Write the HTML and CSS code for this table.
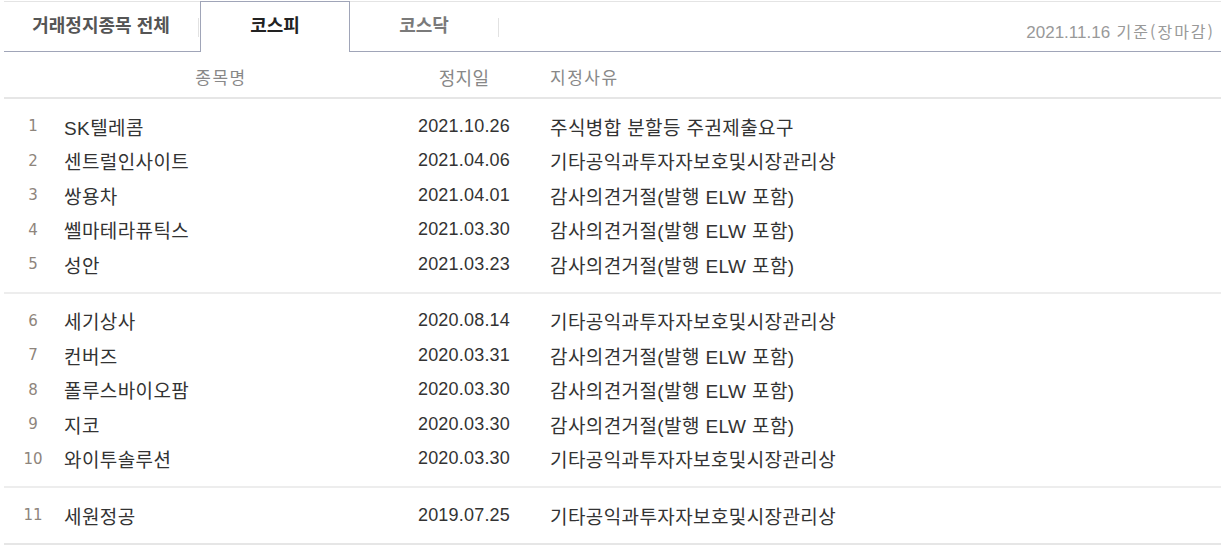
FILE: index.html
```html
<!DOCTYPE html>
<html lang="ko">
<head>
    <meta charset="UTF-8">
    <title>거래정지종목</title>
    <link rel="stylesheet" href="styles.css">
</head>
<body>
    <div class="board">
        <div class="tabs">
            <a class="tab tab-all">거래정지종목 전체</a><span class="sep"></span>
            <a class="tab on">코스피</a>
            <a class="tab">코스닥</a><span class="sep"></span>
            <p class="base-date"><span class="num">2021.11.16</span> 기준(장마감)</p>
        </div>
        <div class="row thead">
            <span></span>
            <span class="name">종목명</span>
            <span class="date">정지일</span>
            <span class="reason">지정사유</span>
        </div>
        <div class="group">
            <div class="row"><span class="no">1</span><span class="name">SK텔레콤</span><span class="date">2021.10.26</span><span class="reason">주식병합 분할등 주권제출요구</span></div>
            <div class="row"><span class="no">2</span><span class="name">센트럴인사이트</span><span class="date">2021.04.06</span><span class="reason">기타공익과투자자보호및시장관리상</span></div>
            <div class="row"><span class="no">3</span><span class="name">쌍용차</span><span class="date">2021.04.01</span><span class="reason">감사의견거절(발행 ELW 포함)</span></div>
            <div class="row"><span class="no">4</span><span class="name">쎌마테라퓨틱스</span><span class="date">2021.03.30</span><span class="reason">감사의견거절(발행 ELW 포함)</span></div>
            <div class="row"><span class="no">5</span><span class="name">성안</span><span class="date">2021.03.23</span><span class="reason">감사의견거절(발행 ELW 포함)</span></div>
        </div>
        <div class="group">
            <div class="row"><span class="no">6</span><span class="name">세기상사</span><span class="date">2020.08.14</span><span class="reason">기타공익과투자자보호및시장관리상</span></div>
            <div class="row"><span class="no">7</span><span class="name">컨버즈</span><span class="date">2020.03.31</span><span class="reason">감사의견거절(발행 ELW 포함)</span></div>
            <div class="row"><span class="no">8</span><span class="name">폴루스바이오팜</span><span class="date">2020.03.30</span><span class="reason">감사의견거절(발행 ELW 포함)</span></div>
            <div class="row"><span class="no">9</span><span class="name">지코</span><span class="date">2020.03.30</span><span class="reason">감사의견거절(발행 ELW 포함)</span></div>
            <div class="row"><span class="no">10</span><span class="name">와이투솔루션</span><span class="date">2020.03.30</span><span class="reason">기타공익과투자자보호및시장관리상</span></div>
        </div>
        <div class="group last">
            <div class="row"><span class="no">11</span><span class="name">세원정공</span><span class="date">2019.07.25</span><span class="reason">기타공익과투자자보호및시장관리상</span></div>
        </div>
    </div>
</body>
</html>
```

FILE: styles.css
```css
body {
    margin: 0;
    padding: 0;
    background: #fff;
    font-family: "Liberation Sans", "Noto Sans CJK KR", sans-serif;
    color: #333;
}
.board {
    margin: 1px 0 0 4px;
}
.tabs {
    display: flex;
    align-items: flex-start;
    border-top: 1px solid #e4e4e4;
    border-bottom: 1px solid #a0a5b8;
}
.tab {
    display: block;
    height: 49px;
    line-height: 44px;
    width: 148px;
    text-align: center;
    font-family: "Noto Sans CJK KR", sans-serif;
    font-size: 18px;
    font-weight: bold;
    color: #7a7a7a;
    cursor: pointer;
}
.tab-all {
    width: 194px;
    color: #555;
}
.tab.on {
    height: 50px;
    margin: -1px 0 -1px 1px;
    border: 1px solid #a0a5b8;
    border-bottom: 0;
    background: #fff;
    color: #222;
}
.sep {
    width: 1px;
    height: 19px;
    margin-top: 16px;
    background: #e2e2e2;
}
.base-date {
    margin: 0 0 0 auto;
    padding: 19px 6px 0 0;
    font-size: 16px;
    line-height: 20px;
    color: #999;
    font-family: "Noto Sans CJK KR", sans-serif;
    letter-spacing: 2px;
}
.base-date .num {
    font-family: "Liberation Sans", sans-serif;
    font-size: 17px;
    letter-spacing: 0;
}
.row {
    display: grid;
    grid-template-columns: 58px 316px 172px 1fr;
    align-items: center;
    height: 34.5px;
    font-size: 19px;
    letter-spacing: 0.4px;
}
.thead {
    height: 41px;
    padding-top: 4px;
    border-bottom: 2px solid #e6e6e6;
    font-family: "Noto Sans CJK KR", sans-serif;
    font-size: 17px;
    letter-spacing: 1.5px;
    color: #888;
}
.thead .name,
.thead .date {
    text-align: center;
}
.group {
    padding: 10px 0;
    border-bottom: 2px solid #ededed;
}
.group.last {
    border-bottom-color: #e6e6e6;
}
.no {
    text-align: center;
    font-family: "DejaVu Sans", sans-serif;
    font-size: 15px;
    letter-spacing: 0;
    color: #8e857c;
}
.name {
    padding-left: 2px;
}
.date {
    text-align: center;
    font-size: 18px;
    letter-spacing: 0.2px;
}
.reason {
    padding-left: 0;
}
```
